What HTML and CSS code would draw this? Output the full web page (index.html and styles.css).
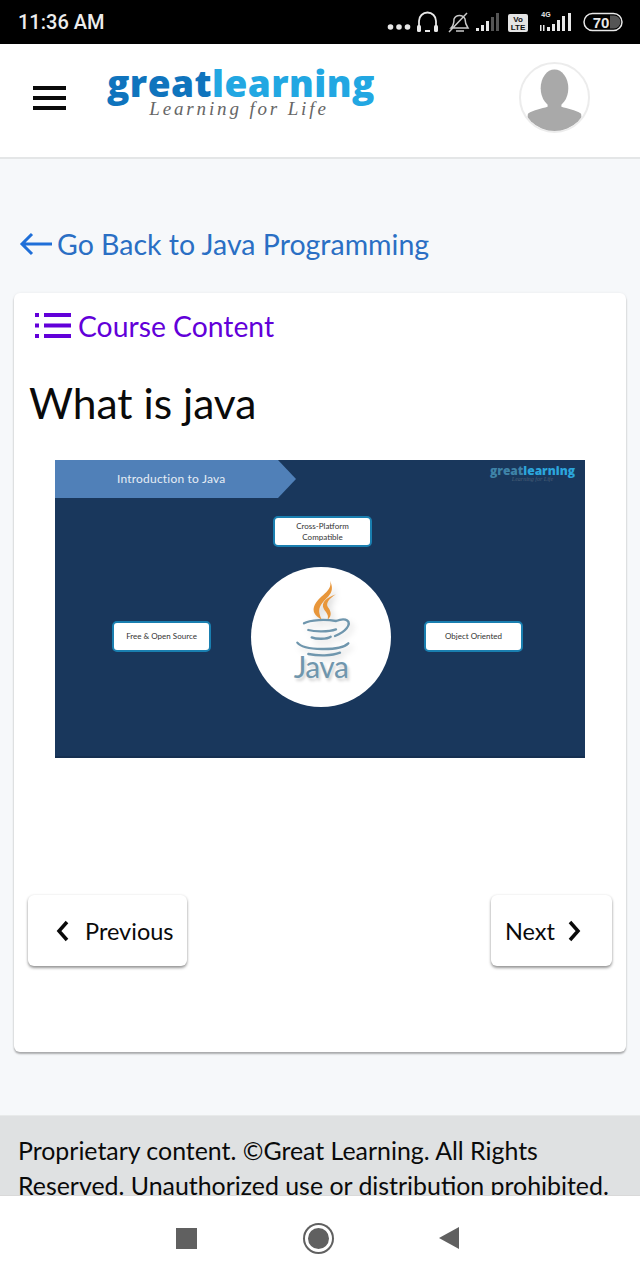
FILE: index.html
```html
<!DOCTYPE html>
<html lang="en">
<head>
<meta charset="utf-8">
<title>What is java</title>
<link rel="stylesheet" href="styles.css">
</head>
<body>
<div class="status">
  <span class="time">11:36 AM</span>
  <svg class="status-icons" width="260" height="30" viewBox="0 0 260 30">
    <g fill="#e8e8e8">
      <circle cx="10.500" cy="20" r="2.800"/><circle cx="19" cy="20" r="2.800"/><circle cx="27.500" cy="20" r="2.800"/>
    </g>
    <path d="M39 22V14a8.500 8.500 0 0 1 17 0v8" fill="none" stroke="#e8e8e8" stroke-width="1.800"/>
    <rect x="37" y="18" width="4" height="7" rx="1.500" fill="#e8e8e8"/>
    <rect x="54" y="18" width="4" height="7" rx="1.500" fill="#e8e8e8"/>
    <rect x="45" y="23" width="5" height="2" fill="#e8e8e8"/>
    <path d="M71 21c3-3 3-6 3-9a6 6 0 0 1 11 0c0 3 1 6 3 9zM76 24h8M69 25L87 6" fill="none" stroke="#c9c9c9" stroke-width="1.500"/>
    <g fill="#e8e8e8">
      <rect x="96" y="21" width="3" height="3"/><rect x="101" y="18" width="3" height="6"/><rect x="106" y="14" width="3" height="10"/>
    </g>
    <rect x="111" y="10" width="3" height="14" fill="#555"/><rect x="116" y="6" width="3" height="18" fill="#555"/>
    <rect x="128" y="7" width="20" height="18" rx="2" fill="#e4e4e4"/>
    <text x="138" y="15" class="volte">Vo</text>
    <text x="138" y="23" class="volte">LTE</text>
    <text x="166" y="10" class="net">4G</text>
    <g fill="#e8e8e8">
      <rect x="160" y="18" width="1.500" height="6"/><rect x="163" y="18" width="1.500" height="6"/>
      <rect x="167" y="20" width="3" height="4"/><rect x="172" y="17" width="3" height="7"/><rect x="177" y="13" width="3" height="11"/><rect x="182" y="9" width="3" height="15"/><rect x="188" y="6" width="3" height="18"/>
    </g>
    <rect x="204" y="6.500" width="38" height="17" rx="8.500" fill="none" stroke="#e8e8e8" stroke-width="1.500"/>
    <path d="M230 8.500h4a6.500 6.500 0 0 1 0 13h-4z" fill="#555"/>
    <text x="221" y="20.500" class="batt">70</text>
  </svg>
</div>

<header class="topbar">
  <div class="burger"><i></i><i></i><i></i></div>
  <div class="logo">
    <div class="logo-word"><span class="great">great</span><span class="learning">learning</span></div>
    <div class="logo-tag">Learning for Life</div>
  </div>
  <div class="avatar">
    <svg width="68" height="68" viewBox="0 0 68 68">
      <defs><clipPath id="av"><circle cx="34" cy="34" r="34"/></clipPath></defs>
      <g clip-path="url(#av)" fill="#a9a9a9">
        <ellipse cx="34" cy="24" rx="14" ry="19"/>
        <path d="M27 38h14v5c6 2 14 3 20 7l2 20H5l2-20c6-4 14-5 20-7z"/>
      </g>
    </svg>
  </div>
</header>

<main class="scroll">
  <a class="back">
    <svg width="34" height="26" viewBox="0 0 34 26"><path d="M33 13H3M13 3L3 13l10 10" fill="none" stroke="#1f6fd8" stroke-width="3"/></svg>
    <span>Go Back to Java Programming</span>
  </a>

  <section class="card">
    <div class="content-link">
      <svg width="38" height="28" viewBox="0 0 38 28">
        <g fill="#6200d9">
          <rect x="1" y="1" width="4" height="4"/><rect x="1" y="11.500" width="4" height="4"/><rect x="1" y="22" width="4" height="4"/>
          <rect x="10" y="1" width="27" height="4"/><rect x="10" y="11.500" width="27" height="4"/><rect x="10" y="22" width="27" height="4"/>
        </g>
      </svg>
      <span>Course Content</span>
    </div>
    <h1 class="title">What is java</h1>

    <div class="slide">
      <div class="banner">Introduction to Java</div>
      <div class="slide-logo"><span class="s-great">great</span><span class="s-learning">learning</span><small>Learning for Life</small></div>
      <div class="pill pill-top">Cross-Platform<br>Compatible</div>
      <div class="pill pill-left">Free &amp; Open Source</div>
      <div class="pill pill-right">Object Oriented</div>
      <div class="java-disc">
        <svg class="java-mark" width="140" height="140" viewBox="33 21 420 420">
          <path d="M270 62C280 95 235 105 222 140C216 160 232 170 246 180C236 160 232 145 250 125C268 105 285 95 270 62Z" fill="#e8963a"/>
          <path d="M288 103C262 112 240 128 252 148C258 158 268 165 262 180C278 168 272 152 264 142C256 130 268 115 288 103Z" fill="#e8963a"/>
          <path d="M192 190C210 178 260 178 288 183M205 210C225 216 265 216 288 208M215 232C230 238 260 238 272 230M172 248C190 272 300 274 325 250M205 282C235 288 275 288 300 278M288 183C320 170 335 185 320 205C312 215 300 222 285 228" fill="none" stroke="#6f96ad" stroke-width="7" stroke-linecap="round"/>
        </svg>
        <div class="java-word">Java</div>
      </div>
    </div>

    <div class="pager">
      <button class="page-btn prev">
        <svg width="14" height="22" viewBox="0 0 14 22"><path d="M11 2L3 11l8 9" fill="none" stroke="#0a0a0a" stroke-width="3.500"/></svg>
        <span>Previous</span>
      </button>
      <button class="page-btn next">
        <span>Next</span>
        <svg width="14" height="22" viewBox="0 0 14 22"><path d="M3 2l8 9-8 9" fill="none" stroke="#0a0a0a" stroke-width="3.500"/></svg>
      </button>
    </div>
  </section>

  <footer class="legal">Proprietary content. ©Great Learning. All Rights Reserved. Unauthorized use or distribution prohibited.</footer>
</main>

<nav class="sysnav">
  <span class="nav-square"></span>
  <span class="nav-circle"></span>
  <svg width="22" height="24" viewBox="0 0 22 24"><path d="M21 1v22L1 12z" fill="#606060"/></svg>
</nav>
</body>
</html>
```
FILE: styles.css
```css
* { box-sizing: border-box; }
html, body { margin: 0; padding: 0; }
body {
  width: 640px;
  height: 1280px;
  overflow: hidden;
  display: flex;
  flex-direction: column;
  background: #f6f8fa;
  font-family: Lato, "Liberation Sans", sans-serif;
  color: #0a0a0a;
}

/* status bar */
.status {
  height: 44px;
  flex: none;
  background: #000;
  display: flex;
  align-items: center;
  justify-content: space-between;
  padding: 0 0 0 18px;
}
.time {
  font-family: Roboto, sans-serif;
  font-size: 20px;
  font-weight: 500;
  color: #ececec;
}
.volte { font: 700 8px "Liberation Sans", sans-serif; fill: #111; text-anchor: middle; }
.net { font: 700 7px "Liberation Sans", sans-serif; fill: #e8e8e8; text-anchor: middle; }
.batt { font: 700 15px "Liberation Sans", sans-serif; fill: #e8e8e8; text-anchor: middle; }

/* header */
.topbar {
  height: 115px;
  flex: none;
  background: #fff;
  border-bottom: 2px solid #e4e6e7;
  display: flex;
  align-items: flex-start;
  padding: 0 50px 0 33px;
}
.burger {
  width: 33px;
  margin-top: 42px;
  display: flex;
  flex-direction: column;
  gap: 6px;
}
.burger i { display: block; height: 4px; background: #0a0a0a; }
.logo { margin: 22px 0 0 41px; width: 267px; }
.logo-word {
  font-family: "Open Sans", sans-serif;
  font-weight: 800;
  font-size: 37px;
  line-height: 34px;
  letter-spacing: 0.45px;
  white-space: nowrap;
}
.great { color: #0f74bd; }
.learning { color: #22a7e2; }
.logo-tag {
  font-family: "Liberation Serif", serif;
  font-style: italic;
  font-size: 19px;
  line-height: 13px;
  letter-spacing: 2.850px;
  color: #666;
  text-align: center;
  margin: 2px 0 0 -3px;
}
.avatar {
  margin: 18px 0 0 auto;
  width: 71px;
  height: 71px;
  border: 2px solid #ececec;
  border-radius: 50%;
  overflow: hidden;
  background: #fff;
  display: flex;
  align-items: center;
  justify-content: center;
}

/* scrolling area */
.scroll {
  flex: 1;
  min-height: 0;
  overflow: hidden;
  display: flex;
  flex-direction: column;
}
.back {
  display: flex;
  align-items: center;
  gap: 4px;
  margin: 66px 0 0 19px;
  height: 38px;
  font-size: 28.500px;
  color: #2a6fc4;
  flex: none;
}
.card {
  flex: none;
  margin: 30px 14px 0;
  height: 759px;
  background: #fff;
  border-radius: 6px;
  box-shadow: 0 2px 2px rgba(0, 0, 0, .3), 0 0 3px rgba(0, 0, 0, .06);
  display: flex;
  flex-direction: column;
  padding: 0 14px;
}
.content-link {
  display: flex;
  align-items: center;
  gap: 6px;
  margin: 18px 0 0 6px;
  height: 30px;
  font-size: 28.300px;
  color: #6200d9;
}
.title {
  margin: 35px 0 0 1px;
  font-size: 42.500px;
  font-weight: 400;
  line-height: 54px;
  color: #0a0a0a;
}

/* slide */
.slide {
  position: relative;
  flex: none;
  width: 530px;
  height: 298px;
  margin: 30px 0 0 27px;
  background: #19375c;
  border-bottom: 2px solid #152f50;
  overflow: hidden;
}
.banner {
  position: absolute;
  left: 0;
  top: 0;
  width: 241px;
  height: 38px;
  background: #5080b8;
  clip-path: polygon(0 0, 223px 0, 241px 19px, 223px 38px, 0 38px);
  color: #e6edf5;
  font-size: 12px;
  line-height: 38px;
  padding-left: 62px;
  letter-spacing: .2px;
}
.slide-logo {
  position: absolute;
  right: 10px;
  top: 6px;
  width: 85px;
  font: 800 12px/10px "Open Sans", sans-serif;
  white-space: nowrap;
}
.s-great { color: #3f83a8; }
.s-learning { color: #2ca6dc; }
.slide-logo small {
  display: block;
  margin-top: 1px;
  font: italic 6px/5px "Liberation Serif", serif;
  color: #4a6078;
  text-align: center;
}
.pill {
  position: absolute;
  background: #fff;
  border: 2px solid #1a7fb0;
  border-radius: 5px;
  color: #333;
  font-size: 8px;
  line-height: 11px;
  text-align: center;
  display: flex;
  align-items: center;
  justify-content: center;
}
.pill-top { left: 218px; top: 56px; width: 99px; height: 31px; }
.pill-left { left: 57px; top: 161px; width: 99px; height: 31px; }
.pill-right { left: 369px; top: 161px; width: 99px; height: 31px; }
.java-disc {
  position: absolute;
  left: 196px;
  top: 107px;
  width: 140px;
  height: 140px;
  border-radius: 50%;
  background: #fff;
}
.java-mark {
  position: absolute;
  left: 0;
  top: 0;
  filter: drop-shadow(3px 4px 3px rgba(0, 0, 0, .15));
}
.java-word {
  position: absolute;
  left: 0;
  right: 0;
  top: 80px;
  text-align: center;
  font-size: 30px;
  line-height: 38px;
  letter-spacing: -.5px;
  color: #6f96ad;
  text-shadow: 2px 3px 3px rgba(0, 0, 0, .18);
}

/* pager */
.pager {
  display: flex;
  justify-content: space-between;
  margin-top: 137px;
}
.page-btn {
  height: 71px;
  border: 0;
  border-radius: 6px;
  background: #fff;
  box-shadow: 0 2px 3px rgba(0, 0, 0, .4), 0 0 3px rgba(0, 0, 0, .08);
  display: flex;
  align-items: center;
  font-family: inherit;
  font-size: 23.500px;
  color: #0a0a0a;
  padding: 0;
}
.prev { width: 159px; gap: 15px; padding-left: 28px; }
.next { width: 121px; gap: 12px; padding-left: 14px; }

/* footer */
.legal {
  flex: none;
  margin-top: 63px;
  height: 120px;
  padding: 17px 18px 0;
  background: #dfe1e2;
  border-top: 1px solid #e8eaea;
  font-size: 24.900px;
  line-height: 35px;
  color: #0a0a0a;
}

/* system nav */
.sysnav {
  flex: none;
  height: 85px;
  background: #fff;
  border-top: 1px solid #d9d9d9;
  display: flex;
  align-items: center;
  padding: 0 0 0 176px;
}
.nav-square { width: 21px; height: 21px; background: #606060; }
.nav-circle {
  width: 27px;
  height: 27px;
  margin-left: 108px;
  border-radius: 50%;
  background: #606060;
  border: 3px solid #fff;
  box-shadow: 0 0 0 2px #606060;
}
.sysnav svg { margin-left: 106px; }
```
